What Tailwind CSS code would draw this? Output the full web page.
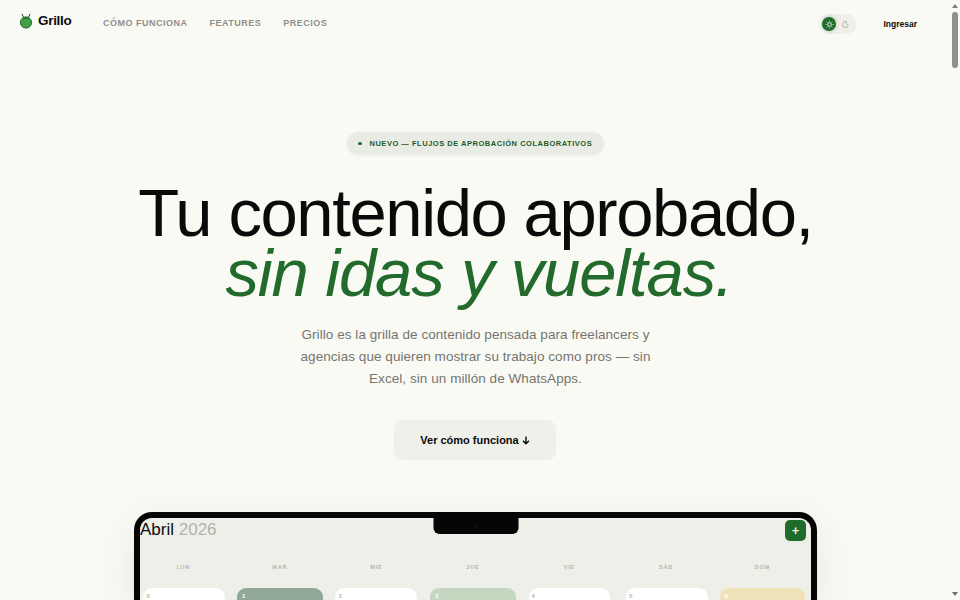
<!doctype html>
<html lang="es">
<head>
<meta charset="utf-8">
<script src="https://cdn.jsdelivr.net/npm/@tailwindcss/browser@4"></script>
</head>
<body class="m-0 h-[600px] overflow-hidden bg-[#fafaf5] font-['Liberation_Sans',sans-serif]">
<div class="flex h-[600px] w-[960px] overflow-hidden">
  <main class="flex h-[600px] w-[951px] shrink-0 flex-col overflow-hidden">
    <header class="flex h-[48px] shrink-0 items-center pl-[19px] pr-[34px]">
      <div class="mb-[7px] flex w-[84px] items-center gap-[5px]">
        <svg width="14" height="16" viewBox="0 0 14 16"><path d="M4.5 4 2.8 .9M9.5 4 11.2 .9" stroke="#1a3a1e" stroke-width="1" fill="none"/><circle cx="7" cy="9.5" r="5.6" fill="#43a047" stroke="#1f6b2a" stroke-width="1"/><path d="M4.2 5.6Q7 4 9.8 5.6" stroke="#1f6b2a" stroke-width="1.2" fill="none"/></svg>
        <span class="text-[13.5px] font-bold leading-none tracking-[-0.3px] text-[#0a0a0a]">Grillo</span>
      </div>
      <nav class="flex gap-[22px] text-[9px] font-bold tracking-[0.5px] text-[#8f8f8a]">
        <a>CÓMO FUNCIONA</a><a>FEATURES</a><a>PRECIOS</a>
      </nav>
      <div class="ml-auto flex items-center gap-[26px]">
        <div class="flex h-[20px] w-[36px] items-center rounded-full bg-[#f0f0eb] pl-[1px]">
          <span class="flex h-[14px] w-[14px] items-center justify-center rounded-full bg-[#1f6b2a] shadow-[0_0_5px_rgba(31,107,42,0.3)]"><svg width="9" height="9" viewBox="0 0 8 8"><circle cx="4" cy="4" r="1.6" fill="none" stroke="#cfe5cf" stroke-width=".9"/><path d="M4 .4v1M4 6.6v1M.4 4h1M6.6 4h1M1.5 1.5l.7.7M5.8 5.8l.7.7M1.5 6.5l.7-.7M5.8 2.2l.7-.7" stroke="#cfe5cf" stroke-width=".8"/></svg></span>
          <span class="ml-[2px] flex h-[14px] w-[14px] items-center justify-center"><svg width="7" height="7" viewBox="0 0 8 8"><path d="M5 .8A3.4 3.4 0 1 0 7.3 5 3 3 0 0 1 5 .8Z" fill="none" stroke="#a5a5a0" stroke-width=".9"/></svg></span>
        </div>
        <a class="text-[8.5px] font-bold text-[#0a0a0a]">Ingresar</a>
      </div>
    </header>
    <section class="flex shrink-0 flex-col items-center">
      <div class="mt-[84px] flex h-[23px] w-[257px] items-center whitespace-nowrap rounded-full bg-[#e9ece4] pl-[11px] text-[7.5px] font-bold tracking-[0.52px] text-[#1f5a28] shadow-[0_1px_4px_rgba(0,0,0,0.04)]">
        <span class="mr-[8px] h-[3.5px] w-[3.5px] rounded-full bg-[#1f6b2a]"></span>NUEVO — FLUJOS DE APROBACIÓN COLABORATIVOS
      </div>
      <h1 class="mt-[28px] text-center text-[67px] font-normal leading-[60px] tracking-[-1.4px] text-[#0a0a0a]">Tu contenido aprobado,<br><em class="pl-[7px] italic tracking-[-1.15px] text-[#236b2c]">sin idas y vueltas.</em></h1>
      <p class="mt-[21px] w-[380px] text-center text-[13.5px] leading-[22px] tracking-[0.06px] text-[#75756f]">Grillo es la grilla de contenido pensada para freelancers y agencias que quieren mostrar su trabajo como pros — sin Excel, sin un millón de WhatsApps.</p>
      <a class="mt-[30px] mr-[1px] flex h-[40px] w-[162px] items-center justify-center gap-[3px] rounded-[10px] bg-[#f0f0eb] text-[11px] font-bold text-[#0a0a0a] shadow-[0_0_2px_rgba(0,0,0,0.06)]">Ver cómo funciona<svg width="8" height="9" viewBox="0 0 8 9"><path d="M4 .5v7M1 4.8 4 7.8 7 4.8" fill="none" stroke="#0a0a0a" stroke-width="1.4"/></svg></a>
    </section>
    <div class="mx-auto mt-[52px] w-[683px] shrink-0 rounded-t-[18px] border-x-[6px] border-t-[6px] border-[#050505] bg-[#efefe9] shadow-[0_10px_40px_rgba(0,0,0,0.08)]">
      <div class="relative h-[90px] overflow-hidden rounded-t-[12px]">
        <div class="absolute left-1/2 top-0 flex h-[16px] w-[85px] -translate-x-1/2 items-center justify-center rounded-b-[6px] bg-[#050505]"><span class="h-[3px] w-[3px] rounded-full bg-[#141414]"></span></div>
        <div class="flex items-start justify-between pr-[5px]">
          <p class="mt-[1px] text-[17px] leading-[22px] text-[#0a0a0a]">Abril <span class="text-[#b3b3ac]">2026</span></p>
          <button class="mt-[2px] flex h-[21px] w-[21px] items-center justify-center rounded-[5px] bg-[#1f6b2a] text-[13px] font-bold leading-none text-[#e8f2e6]">+</button>
        </div>
        <div class="mt-[22px] grid grid-cols-7 gap-[10.7px] pr-[5.6px] pl-[0.4px] text-center text-[5.5px] font-bold tracking-[0.8px] text-[#b5b5ae]">
          <span>LUN</span><span>MAR</span><span>MIÉ</span><span>JUE</span><span>VIE</span><span>SÁB</span><span>DOM</span>
        </div>
        <div class="mt-[17px] grid grid-cols-7 gap-[10.7px] pr-[5.6px] pl-[0.4px] text-[6px] font-bold">
          <div class="ml-[3px] mr-[1px] h-[40px] rounded-[9px] bg-white pl-[3px] pt-[4px] text-[#b5b5ae]">0</div>
          <div class="h-[40px] rounded-[9px] bg-[#8fa898] pl-[5px] pt-[4px] text-white">1</div>
          <div class="mx-[2px] h-[40px] rounded-[9px] bg-white pl-[3px] pt-[4px] text-[#b5b5ae]">2</div>
          <div class="h-[40px] rounded-[9px] bg-[#c5d6c1] pl-[5px] pt-[4px] text-white">3</div>
          <div class="mx-[2px] h-[40px] rounded-[9px] bg-white pl-[3px] pt-[4px] text-[#b5b5ae]">4</div>
          <div class="ml-[3px] mr-[1px] h-[40px] rounded-[9px] bg-white pl-[3px] pt-[4px] text-[#b5b5ae]">5</div>
          <div class="h-[40px] rounded-[9px] bg-[#efe2b8] pl-[5px] pt-[4px] text-white">6</div>
        </div>
      </div>
    </div>
  </main>
  <aside class="relative h-[600px] w-[9px] shrink-0 bg-[#fafaf5]">
    <span class="absolute left-[1px] top-[4px] h-0 w-0 border-x-[3.5px] border-b-[4px] border-x-transparent border-b-[#7f7f7b]"></span>
    <span class="absolute left-[1px] top-[12px] h-[56px] w-[6px] rounded-full bg-[#8f8f8b]"></span>
    <span class="absolute bottom-[4px] left-[1px] h-0 w-0 border-x-[3.5px] border-t-[4px] border-x-transparent border-t-[#6f6f6b]"></span>
  </aside>
</div>
</body>
</html>
